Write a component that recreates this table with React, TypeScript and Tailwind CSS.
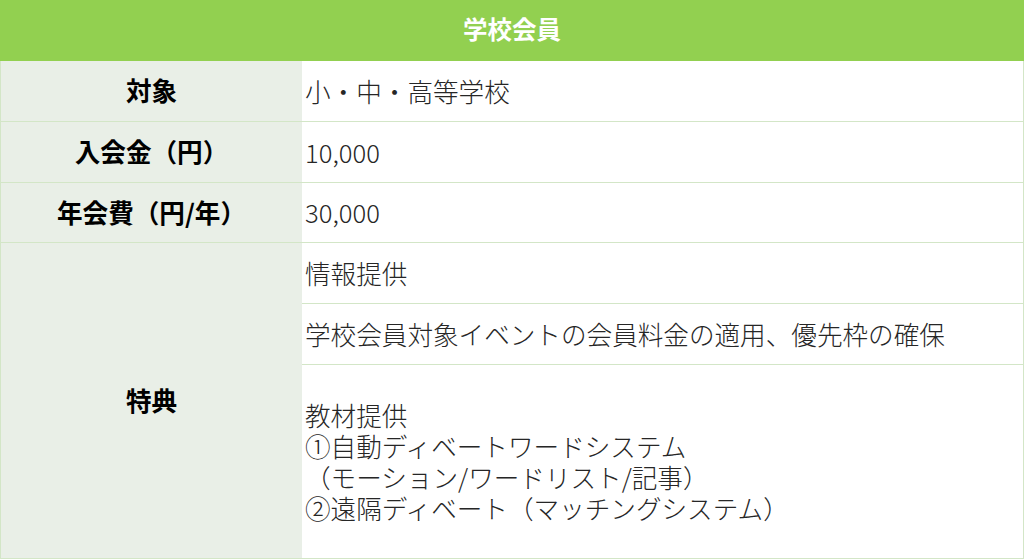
import React from "react";

const font = { fontFamily: '"Noto Sans CJK JP", "Noto Sans", sans-serif' };

export default function App() {
  const label =
    "bg-[#e9efe7] border-l border-b border-[#d3e6c7] flex items-center justify-center font-bold text-black text-[25.6px] leading-[31px] pb-[3px]";
  const cell =
    "bg-white border-r border-b border-[#d3e6c7] flex items-center text-[#262626] text-[25.6px] font-light pl-[3px] leading-[31px] pb-[2px]";
  return (
    <div className="w-[1024px] h-[559px] bg-white flex flex-col" style={font}>
      <div className="h-[61px] bg-[#92d050] text-white font-bold text-[24.5px] flex items-center justify-center pb-[2px]">
        学校会員
      </div>
      <div className="grid grid-cols-[302px_1fr] grid-rows-[61px_61px_60px_61px_61px_194px]">
        <div className={label}>対象</div>
        <div className={cell}>小・中・高等学校</div>
        <div className={label}>入会金（円）</div>
        <div className={cell}>10,000</div>
        <div className={label}>年会費（円/年）</div>
        <div className={cell}>30,000</div>
        <div className={`${label} row-span-3`}>特典</div>
        <div className={cell}>情報提供</div>
        <div className={cell + " whitespace-nowrap"}>学校会員対象イベントの会員料金の適用、優先枠の確保</div>
        <div className={cell}>
          <div className="flex flex-col">
            <span>教材提供</span>
            <span>①自動ディベートワードシステム</span>
            <span>（モーション/ワードリスト/記事）</span>
            <span>②遠隔ディベート（マッチングシステム）</span>
          </div>
        </div>
      </div>
    </div>
  );
}
